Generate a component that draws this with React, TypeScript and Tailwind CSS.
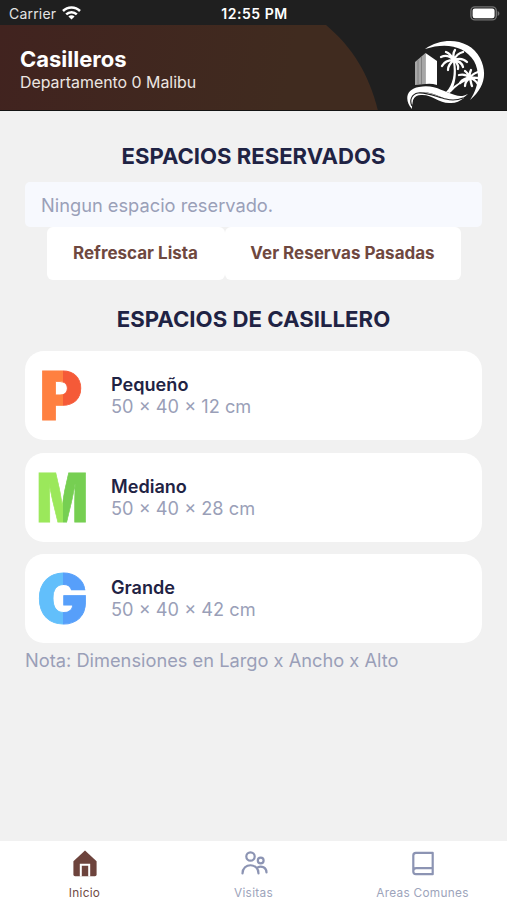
// App.tsx

interface Locker {
  letter: string;
  name: string;
  size: string;
  light: string;
  dark: string;
  x: number;
  width: number;
}

const lockers: Locker[] = [
  { letter: 'P', name: 'Pequeño', size: '50 × 40 × 12 cm', light: '#ff8040', dark: '#f55a38', x: 0.5, width: 43 },
  { letter: 'M', name: 'Mediano', size: '50 × 40 × 28 cm', light: '#9be85b', dark: '#76cf52', x: -2.5, width: 51.5 },
  { letter: 'G', name: 'Grande', size: '50 × 40 × 42 cm', light: '#62bffb', dark: '#579ffa', x: -2, width: 51 },
];

function StatusBar() {
  return (
    <div className="h-[25px] bg-[#1f1f1f] text-white grid grid-cols-3 items-center pl-[9px] pr-[7px] pt-[3px]">
      <div className="flex items-center gap-[6px]">
        <span className="text-[14px] leading-none tracking-[0.2px] text-[#e4e4e4]">Carrier</span>
        <svg className="-mt-[2px]" width="19" height="14" viewBox="0 0 19 14" fill="none" stroke="#fff" strokeWidth="2.5">
          <path d="M1 5a12 12 0 0 1 17 0" />
          <path d="M4.2 8.4a7.5 7.5 0 0 1 10.6 0" />
          <path d="M9.5 13.6 6.4 10.5a4.4 4.4 0 0 1 6.2 0z" fill="#fff" stroke="none" />
        </svg>
      </div>
      <span className="text-center text-[14px] leading-none font-semibold tracking-[0.55px] whitespace-nowrap">
        12:55 PM
      </span>
      <svg className="justify-self-end -mt-[2px]" width="30" height="15" viewBox="0 0 30 15">
        <rect x="0.9" y="0.9" width="25.4" height="13" rx="4" fill="none" stroke="#727272" strokeWidth="1.4" />
        <rect x="2.6" y="2.6" width="22" height="9.6" rx="2.2" fill="#fff" />
        <path d="M27.6 5v5c2.4-.8 2.4-4.2 0-5z" fill="#727272" />
      </svg>
    </div>
  );
}

function Logo() {
  return (
    <svg width="84" height="74" viewBox="0 0 84 74" fill="none">
      {/* Ring */}
      <path d="M19 12C38-1 64 2 74 21c8 16 4 30-10 42 8-12 11-26 4-39C59 9 40 5 19 12z" fill="#fff" />
      {/* Tower */}
      <path d="M9 25 19.5 16v31L9 48z" fill="#a6a6a6" />
      <path d="M12 23v24M15.5 20v27" stroke="#777" strokeWidth="0.8" />
      <path d="M19.5 16 31 24v24q-6-2-11.5-1z" fill="#fff" />
      {/* Trunks */}
      <path d="M47 25c2 12 0 23-7 30l4 1c6-8 7-21 5-31z" fill="#fff" />
      <path d="M63 41c-9 3-16 8-21 14h3c5-6 11-10 18-12z" fill="#fff" />
      {/* Fronds */}
      <g stroke="#fff" strokeWidth="2.3" strokeLinecap="round">
        <path d="M48 23c-4-4-9-5-13-3M48 23c-6 0-10 2-12 6M48 23c-4 3-6 6-6 10M48 23c-3-5-5-7-8-8M48 23c-1-4-1-7 1-10M48 23c2-5 5-7 9-8M48 23c5-2 9-2 13 2M48 23c5 1 8 3 9 7M48 23c3 3 5 6 4 9" />
        <path d="M64 41c-3-3-7-4-11-3M64 41c-5 0-8 2-10 5M64 41c-3 2-5 5-5 8M64 41c-2-4-3-6-5-7M64 41c-1-3 0-6 1-8M64 41c2-4 5-5 8-6M64 41c4-1 7 0 10 0M64 41c4 1 6 3 8 6M64 41c1 4 1 6 2 8" />
      </g>
      {/* Wave */}
      <path
        d="M6 72C-2 63 0 52 13 50c16-3 24 5 36 8 5 2 9 1 13-1-8 8-17 7-27 3-11-5-21-8-26-1-3 4-3 9-3 13z"
        fill="#fff"
      />
      <path d="M7 70c-2-6 1-12 8-12 11-1 18 9 30 8 5 0 9-2 13-5-9 2-18 1-26-2-11-4-21-6-25 1-2 3-1 7 0 10z" fill="#fff" />
      <path d="M6 69c-3-6 0-12 6-13 9-1 19 4 28 6 7 2 12 1 17-1" stroke="#1f1f1f" strokeWidth="1.1" />
    </svg>
  );
}

function Header() {
  return (
    <header className="relative h-[86px] bg-[#1f1f1f] overflow-hidden border-b border-[#141414]">
      <svg className="absolute inset-0" width="507" height="86" viewBox="0 0 507 86">
        <defs>
          <linearGradient id="headerFill" gradientUnits="userSpaceOnUse" x1="0" y1="0" x2="290" y2="50">
            <stop offset="0" stopColor="#41231f" />
            <stop offset="1" stopColor="#402b1f" />
          </linearGradient>
        </defs>
        <path d="M0 0h326c26 22 43 49 52 86H0z" fill="url(#headerFill)" />
      </svg>
      <div className="relative flex justify-between pl-[20px] pr-[17px]">
        <div className="pt-[21px]">
          <h1 className="text-[22px] leading-[26px] font-bold text-white">Casilleros</h1>
          <p className="text-[15.9px] leading-[21px] text-[#ede6e2]">Departamento 0 Malibu</p>
        </div>
        <div className="pt-[12px]">
          <Logo />
        </div>
      </div>
    </header>
  );
}

function LockerCard({ locker }: { locker: Locker }) {
  const fillId = `fill-${locker.letter}`;
  return (
    <button className="w-full h-[89px] bg-white rounded-[19px] flex items-center text-left pl-[14px]">
      <svg width="48" height="50" viewBox="0 0 48 50" className="overflow-visible -mt-[1px]">
        <defs>
          <linearGradient id={fillId} gradientUnits="userSpaceOnUse" x1="0" y1="0" x2="48" y2="0">
            <stop offset="0.49" stopColor={locker.light} />
            <stop offset="0.49" stopColor={locker.dark} />
          </linearGradient>
        </defs>
        <text
          x={locker.x}
          y="49.5"
          textLength={locker.width}
          lengthAdjust="spacingAndGlyphs"
          fill={`url(#${fillId})`}
          stroke={`url(#${fillId})`}
          strokeWidth="0.8"
          className="font-['Inter'] font-black text-[67px]"
        >
          {locker.letter}
        </text>
      </svg>
      <div className="ml-[24px]">
        <p className="text-[18.1px] leading-[22px] font-semibold text-[#1f2344]">{locker.name}</p>
        <p className="text-[18.2px] leading-[23px] text-[#9a9fb8]">{locker.size}</p>
      </div>
    </button>
  );
}

function TabBar() {
  return (
    <nav className="h-[59px] bg-white grid grid-cols-3 text-[11.8px] leading-none tracking-[0.3px] text-[#9da4bb]">
      <div className="flex flex-col items-center pt-[9px] gap-[11px] text-[#6f4a43]">
        <svg width="26" height="27" viewBox="0 0 26 27">
          <path
            d="M13 .6 1.4 11.2V24.5q0 1.7 1.7 1.7h19.8q1.7 0 1.7-1.7V11.2z"
            fill="#6d433c"
          />
          <path d="M8.8 26.5V14.7h8.4v11.8" fill="none" stroke="#fff" strokeWidth="2" />
        </svg>
        <span>Inicio</span>
      </div>
      <div className="flex flex-col items-center pt-[9px] gap-[11px]">
        <svg width="28" height="27" viewBox="0 0 28 27" fill="none" stroke="#8c94b3" strokeWidth="2.2" strokeLinecap="round">
          <circle cx="10.5" cy="6.5" r="4.2" />
          <circle cx="20.7" cy="10.5" r="2.9" />
          <path d="M2.5 23.5c0-11 16-11 16 0M17.6 17.4c4-2 8.9.2 8.9 5" />
        </svg>
        <span>Visitas</span>
      </div>
      <div className="flex flex-col items-center pt-[9px] gap-[11px]">
        <svg width="26" height="27" viewBox="0 0 26 27" fill="none" stroke="#8c94b3" strokeWidth="2.2" strokeLinejoin="round">
          <path d="M5.9 2.8h16.8v21.4H5.9q-2.6 0-2.6-2.6V5.4q0-2.6 2.6-2.6zM3.3 21q0-2.9 2.9-2.9h16.5" />
        </svg>
        <span>Areas Comunes</span>
      </div>
    </nav>
  );
}

export default function App() {
  return (
    <div className="w-[507px] h-[900px] bg-[#f1f1f1] flex flex-col font-['Inter',sans-serif]">
      <StatusBar />
      <Header />

      <main className="flex-1 px-[25px] pt-[32px]">
        <h2 className="text-center text-[22.1px] leading-[26px] font-bold text-[#1f2344]">ESPACIOS RESERVADOS</h2>
        <div className="mt-[13px] h-[45px] rounded-[5px] bg-[#f7f9fe] flex items-center pl-[16px] pt-[2px] text-[18.25px] text-[#9aa0b8]">
          Ningun espacio reservado.
        </div>

        <div className="flex justify-center text-[17px] font-bold text-[#6f483f]">
          <button className="w-[178px] h-[53px] bg-white rounded-[6px]">Refrescar Lista</button>
          <button className="w-[236px] h-[53px] bg-white rounded-[6px]">Ver Reservas Pasadas</button>
        </div>

        <h2 className="mt-[26px] text-center text-[22.2px] leading-[26px] font-bold text-[#1f2344]">
          ESPACIOS DE CASILLERO
        </h2>
        <div className="mt-[19px] flex flex-col gap-[12.6px]">
          {lockers.map(locker => (
            <LockerCard key={locker.letter} locker={locker} />
          ))}
        </div>
        <p className="mt-[5px] text-[18.25px] leading-[24px] text-[#9a9fb8]">Nota: Dimensiones en Largo x Ancho x Alto</p>
      </main>

      <TabBar />
    </div>
  );
}
